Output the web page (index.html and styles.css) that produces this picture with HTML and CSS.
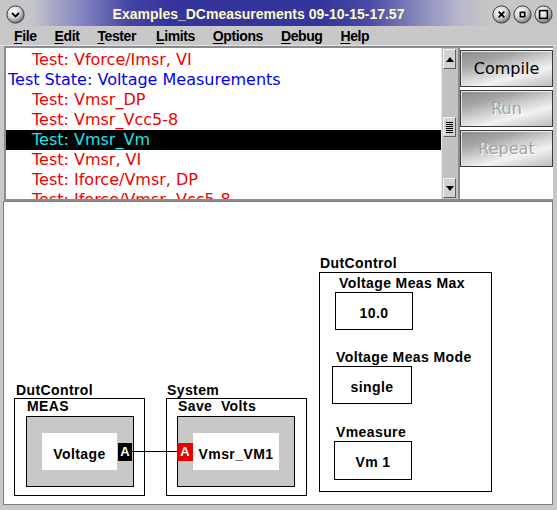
FILE: index.html
```html
<!DOCTYPE html>
<html>
<head>
<meta charset="utf-8">
<link rel="stylesheet" href="styles.css">
</head>
<body>
<div class="titlebar">
  <svg class="tbtn" width="19" height="19" viewBox="0 0 19 19">
    <defs><radialGradient id="g1" cx="38%" cy="32%" r="70%"><stop offset="0" stop-color="#ffffff"/><stop offset=".55" stop-color="#d4d4d4"/><stop offset="1" stop-color="#6e6e6e"/></radialGradient></defs>
    <circle cx="9.5" cy="9.5" r="8.6" fill="url(#g1)" stroke="#3a3a3a" stroke-width="1"/>
    <path d="M6 8 L9.5 11.5 L13 8" fill="none" stroke="#000" stroke-width="1.8"/>
  </svg>
  <div class="title">Examples_DCmeasurements 09-10-15-17.57</div>
  <div class="tbtns">
    <svg class="tbtn" width="19" height="19" viewBox="0 0 19 19">
      <defs><radialGradient id="g2" cx="38%" cy="32%" r="70%"><stop offset="0" stop-color="#ffffff"/><stop offset=".55" stop-color="#d4d4d4"/><stop offset="1" stop-color="#6e6e6e"/></radialGradient></defs>
      <circle cx="9.5" cy="9.5" r="8.6" fill="url(#g2)" stroke="#3a3a3a" stroke-width="1"/>
      <path d="M6.7 6.7 L12.3 12.3 M12.3 6.7 L6.7 12.3" fill="none" stroke="#000" stroke-width="1.8"/>
    </svg>
    <svg class="tbtn" width="19" height="19" viewBox="0 0 19 19">
      <defs><radialGradient id="g3" cx="38%" cy="32%" r="70%"><stop offset="0" stop-color="#ffffff"/><stop offset=".55" stop-color="#d4d4d4"/><stop offset="1" stop-color="#6e6e6e"/></radialGradient></defs>
      <circle cx="9.5" cy="9.5" r="8.6" fill="url(#g3)" stroke="#3a3a3a" stroke-width="1"/>
      <rect x="7.3" y="7.3" width="4.4" height="4.4" fill="none" stroke="#000" stroke-width="1.6"/>
    </svg>
    <svg class="tbtn" width="19" height="19" viewBox="0 0 19 19">
      <defs><radialGradient id="g4" cx="38%" cy="32%" r="70%"><stop offset="0" stop-color="#ffffff"/><stop offset=".55" stop-color="#d4d4d4"/><stop offset="1" stop-color="#6e6e6e"/></radialGradient></defs>
      <circle cx="9.5" cy="9.5" r="8.6" fill="url(#g4)" stroke="#3a3a3a" stroke-width="1"/>
      <rect x="5.6" y="5.6" width="7.8" height="7.8" fill="none" stroke="#000" stroke-width="1.6"/>
    </svg>
  </div>
</div>
<div class="menubar">
  <span class="mi"><u>F</u>ile</span>
  <span class="mi"><u>E</u>dit</span>
  <span class="mi"><u>T</u>ester</span>
  <span class="mi wide"><u>L</u>imits</span>
  <span class="mi"><u>O</u>ptions</span>
  <span class="mi"><u>D</u>ebug</span>
  <span class="mi"><u>H</u>elp</span>
</div>
<div class="top">
  <div class="listframe">
    <div class="list">
      <div class="row">Test: Vforce/Imsr, VI</div>
      <div class="row state">Test State: Voltage Measurements</div>
      <div class="row">Test: Vmsr_DP</div>
      <div class="row">Test: Vmsr_Vcc5-8</div>
      <div class="row sel">Test: Vmsr_Vm</div>
      <div class="row">Test: Vmsr, VI</div>
      <div class="row">Test: Iforce/Vmsr, DP</div>
      <div class="row">Test: Iforce/Vmsr, Vcc5-8</div>
    </div>
    <div class="scrollbar">
      <div class="sbtn"><span class="tri up"></span></div>
      <div class="track"><div class="thumb"><div class="grip"></div></div></div>
      <div class="sbtn"><span class="tri down"></span></div>
    </div>
  </div>
  <div class="buttons">
    <div class="btn">Compile</div>
    <div class="btn off">Run</div>
    <div class="btn off">Repeat</div>
  </div>
</div>
<div class="canvas">
  <div class="group g-meas">
    <div class="glabel">DutControl</div>
    <div class="gbox">
      <div class="blabel">MEAS</div>
      <div class="gray end">
        <div class="wbox wb-volt">Voltage</div>
        <div class="port black">A</div>
      </div>
    </div>
  </div>
  <div class="wire"></div>
  <div class="group g-sys">
    <div class="glabel">System</div>
    <div class="gbox">
      <div class="blabel">Save&nbsp; Volts</div>
      <div class="gray start">
        <div class="port red">A</div>
        <div class="wbox wb-vm">Vmsr_VM1</div>
      </div>
    </div>
  </div>
  <div class="group g-dut">
    <div class="glabel">DutControl</div>
    <div class="fbox">
      <div class="field f1"><div class="flabel">Voltage Meas Max</div><div class="val">10.0</div></div>
      <div class="field f2"><div class="flabel">Voltage Meas Mode</div><div class="val">single</div></div>
      <div class="field f3"><div class="flabel">Vmeasure</div><div class="val">Vm 1</div></div>
    </div>
  </div>
</div>
</body>
</html>
```
FILE: styles.css
```css
* { box-sizing: border-box; }
html, body { margin: 0; padding: 0; }
body {
  width: 557px; height: 510px; overflow: hidden;
  background: #c8c8c8;
  font-family: "Liberation Sans", Arial, sans-serif;
}

/* title bar */
.titlebar {
  height: 26px;
  display: flex; align-items: center;
  padding: 0 4px 0 6px;
  background: linear-gradient(90deg, #c6c6c6 0px, #c4c4cc 32px, #8080c0 85px, #4444a4 130px, #34349c 170px, #34349c 320px, #4a4aa6 370px, #8a8abe 420px, #b8b8cc 460px, #c6c6c6 490px);
}
.tbtn { display: block; margin-top: 2px; }
.title {
  flex: 1; text-align: center;
  color: #fbfbc6; font-weight: bold; font-size: 14px;
  padding-top: 2px; white-space: nowrap;
}
.tbtns { display: flex; gap: 2px; }

/* menu */
.menubar {
  height: 20px;
  display: flex; align-items: center; gap: 18px;
  padding-left: 14px; padding-top: 1px;
  font-size: 14px; font-weight: bold; letter-spacing: -0.4px;
  color: #000;
  border-bottom: 1px solid #e4e4e4;
}
.mi.wide { margin-left: 2px; }
.mi u { text-underline-offset: 2px; text-decoration-thickness: 1px; }

/* top area */
.top { display: flex; height: 155px; padding-left: 4px; padding-right: 4px; }
.listframe {
  display: flex;
  border-top: 2px solid #8c8c8c; border-left: 2px solid #8c8c8c; border-bottom: 2px solid #8c8c8c;
}
.list {
  width: 435px; background: #fff; overflow: hidden;
  padding-top: 2px;
  font-family: "DejaVu Sans", sans-serif; font-size: 16px;
}
.row { height: 20px; line-height: 20px; white-space: nowrap; padding-left: 26px; color: #f00000; }
.row.state { padding-left: 2px; color: #0000f0; }
.row.sel { background: #000; color: #1ee4f0; }

.scrollbar {
  width: 17px; background: #c2c2c2;
  border-left: 1px solid #e6e6e6;
  display: flex; flex-direction: column;
  padding: 1px 2px 1px 1px;
}
.sbtn {
  height: 20px; background: #d2d2d2;
  border-top: 1px solid #f4f4f4; border-left: 1px solid #f4f4f4;
  border-right: 1px solid #606060; border-bottom: 1px solid #606060;
  display: flex; align-items: center; justify-content: center;
}
.tri { width: 0; height: 0; border-left: 4px solid transparent; border-right: 4px solid transparent; }
.tri.up { border-bottom: 5px solid #000; }
.tri.down { border-top: 5px solid #000; }
.track { flex: 1; }
.thumb {
  margin-top: 48px; height: 20px; background: #d2d2d2;
  border-top: 1px solid #f4f4f4; border-left: 1px solid #f4f4f4;
  border-right: 1px solid #606060; border-bottom: 1px solid #606060;
  display: flex; align-items: center; justify-content: center;
}
.grip { width: 7px; height: 11px; background: repeating-linear-gradient(180deg, #000 0 1px, transparent 1px 2px); }

.buttons {
  width: 95px; background: #fff;
  border-left: 2px solid #8c8c8c; border-top: 2px solid #8c8c8c; border-bottom: 2px solid #8c8c8c;
  padding-top: 2px;
  display: flex; flex-direction: column; gap: 3px;
}
.btn {
  height: 37px;
  border: 1px solid #3a3a3a;
  box-shadow: inset 1px 1px 0 #e8e8e8;
  background: linear-gradient(165deg, #8a8a8a 0%, #a6a6a6 28%, #d6d6d6 52%, #f2f2f2 68%, #d0d0d0 88%, #bdbdbd 100%);
  display: flex; align-items: center; justify-content: center;
  font-family: "DejaVu Sans", sans-serif; font-size: 16px; color: #000;
}
.btn.off { color: #a4a4a4; text-shadow: 1px 1px 0 #ffffff; }

/* canvas */
.canvas {
  position: relative;
  height: 304px;
  margin: 0 4px 0 3px;
  background: #fff;
  border: 1px solid #808080;
  font-size: 14px; font-weight: bold; letter-spacing: 0.4px;
  color: #000;
}
.group { position: absolute; }
.g-meas { left: 10px; top: 180px; }
.g-sys { left: 162px; top: 180px; }
.g-dut { left: 315px; top: 53px; }
.glabel { line-height: 16px; height: 16px; padding-left: 2px; white-space: nowrap; }
.g-sys .glabel, .g-dut .glabel { padding-left: 1px; }
.gbox { height: 98px; border: 1px solid #000; }
.g-meas .gbox { width: 131px; }
.g-sys .gbox { width: 141px; }
.blabel { line-height: 14px; height: 14px; padding-left: 12px; white-space: nowrap; }
.g-sys .blabel { padding-left: 11px; }
.gray {
  margin-top: 3px; height: 71px;
  background: #c8c8c8; border: 1px solid #000;
  display: flex; align-items: center;
}
.g-meas .gray { margin-left: 11px; width: 108px; justify-content: flex-end; gap: 1px; padding-right: 1px; }
.g-sys .gray { margin-left: 10px; width: 118px; }
.wbox { height: 37px; padding-top: 4px; background: #fff; display: flex; align-items: center; justify-content: center; white-space: nowrap; }
.wb-volt { width: 75px; }
.wb-vm { width: 86px; }
.port {
  height: 18px; color: #fff; font-size: 13px; letter-spacing: 0;
  display: flex; align-items: center; justify-content: center;
}
.port.black { width: 14px; background: #000; }
.port.red { width: 16px; background: #e80000; margin-left: -1px; }
.wire { position: absolute; left: 128px; top: 249px; width: 45px; height: 1px; background: #000; }

.fbox {
  width: 173px; height: 220px; margin-top: 1px;
  border: 1px solid #000;
  display: flex; flex-direction: column; align-items: flex-start;
  padding-top: 2px;
}
.flabel { line-height: 16px; height: 16px; white-space: nowrap; padding-left: 4px; }
.val {
  margin-top: 1px; height: 38px; width: 78px; padding-top: 3px;
  border: 1px solid #000; background: #fff;
  display: flex; align-items: center; justify-content: center;
}
.f1 { margin-left: 15px; }
.f2 { margin-left: 12px; margin-top: 19px; }
.f2 .val { width: 80px; }
.f3 { margin-left: 14px; margin-top: 20px; }
.f3 .flabel { padding-left: 2px; }
.f3 .val { height: 39px; }
```
